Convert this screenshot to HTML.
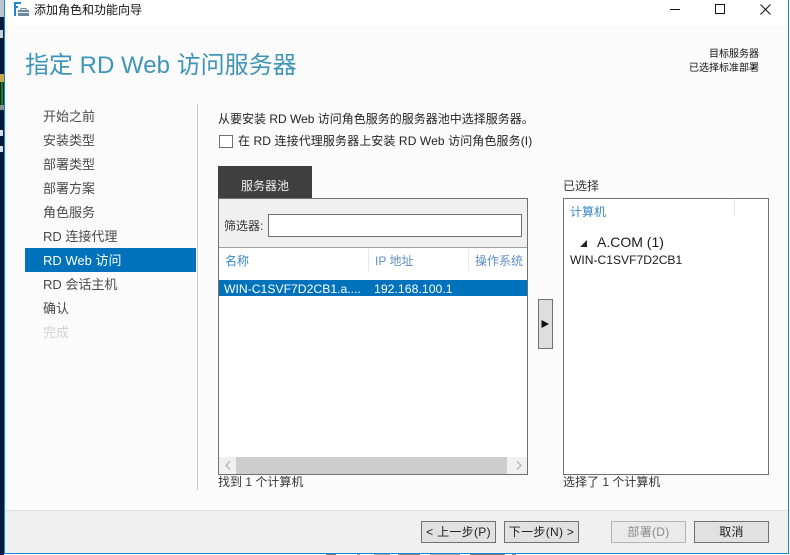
<!DOCTYPE html>
<html><head><meta charset="utf-8">
<style>
html,body{margin:0;padding:0;width:790px;height:555px;overflow:hidden;background:#fff}
*{box-sizing:border-box}
body{position:relative;font-family:"Liberation Sans","Noto Sans CJK SC",sans-serif;font-size:12px;color:#333}
.a{position:absolute;white-space:nowrap}
.nav{position:absolute;left:43px;font-size:13px;line-height:24px;height:24px;color:#4a4a4a;white-space:nowrap}
.btn{position:absolute;top:521px;height:22px;width:75px;background:#e1e1e1;border:1px solid #707070;text-align:center;font-size:12px;line-height:21px;color:#222;letter-spacing:.3px}
</style></head><body>
<!-- desktop strip -->
<div class="a" style="left:0;top:0;width:4px;height:555px;background:#001c3c"></div>
<div class="a" style="left:0;top:0;width:4px;height:17px;background:#b9c6d0"></div>
<div class="a" style="left:0;top:30px;width:3px;height:8px;background:#c8d0d8"></div>
<div class="a" style="left:0;top:74px;width:4px;height:8px;background:#c9a64a"></div>
<div class="a" style="left:1px;top:82px;width:2px;height:23px;background:#0d8a12"></div>
<div class="a" style="left:0;top:105px;width:4px;height:5px;background:#8a8f90"></div>
<div class="a" style="left:0;top:130px;width:3px;height:6px;background:#dde"></div>
<div class="a" style="left:0;top:146px;width:3px;height:6px;background:#dde"></div>
<!-- window -->
<div class="a" style="left:4px;top:0;width:785px;height:554px;background:#fff;border-left:1px solid #1883d7;border-right:1px solid #1883d7;border-bottom:1px solid #1883d7"></div>
<!-- desktop bottom sliver -->
<div class="a" style="left:326px;top:554px;width:10px;height:1px;background:#777"></div>
<div class="a" style="left:357px;top:554px;width:3px;height:1px;background:#999"></div>
<div class="a" style="left:374px;top:554px;width:16px;height:1px;background:#aaa"></div>
<div class="a" style="left:398px;top:554px;width:22px;height:1px;background:#888"></div>
<div class="a" style="left:430px;top:554px;width:30px;height:1px;background:#aaa"></div>
<div class="a" style="left:470px;top:554px;width:35px;height:1px;background:#777"></div>
<div class="a" style="left:512px;top:554px;width:4px;height:1px;background:#999"></div>
<div class="a" style="left:5px;top:25px;width:783px;height:486px;background:#fbfbfb"></div>
<div class="a" style="left:5px;top:510px;width:783px;height:1px;background:#dfdfdf"></div>
<div class="a" style="left:5px;top:511px;width:783px;height:42px;background:#f0f0f0"></div>
<!-- title icon -->
<svg class="a" style="left:14px;top:2px" width="15" height="14" viewBox="0 0 15 14">
<rect x="0" y="0" width="2" height="14" fill="#1e88d8"/><rect x="0" y="0" width="7" height="2" fill="#1e88d8"/><rect x="0" y="4" width="4" height="2" fill="#1e88d8"/>
<rect x="4" y="8" width="11" height="6" fill="#6d8a9c"/><path d="M7 8V6.5H12V8" stroke="#6d8a9c" stroke-width="1" fill="none"/><rect x="4" y="10" width="11" height="1" fill="#e6ecf0"/>
</svg>
<div class="a" style="left:34px;top:1px;font-size:12px;line-height:18px;color:#111">添加角色和功能向导</div>
<!-- window controls -->
<div class="a" style="left:670px;top:9px;width:10px;height:1px;background:#111"></div>
<div class="a" style="left:715px;top:4px;width:10px;height:10px;border:1px solid #111"></div>
<svg class="a" style="left:760px;top:4px" width="11" height="11" viewBox="0 0 11 11"><path d="M0.5 0.5L10.5 10.5M10.5 0.5L0.5 10.5" stroke="#111" stroke-width="1" fill="none"/></svg>
<!-- header -->
<div class="a" style="left:25px;top:49px;font-size:24px;line-height:34px;color:#3f95b9">指定 RD Web 访问服务器</div>
<div class="a" style="right:31px;top:48px;font-size:10px;line-height:14px;color:#111;text-align:right">目标服务器<br>已选择标准部署</div>
<!-- nav -->
<div class="nav" style="top:105px">开始之前</div>
<div class="nav" style="top:129px">安装类型</div>
<div class="nav" style="top:153px">部署类型</div>
<div class="nav" style="top:177px">部署方案</div>
<div class="nav" style="top:201px">角色服务</div>
<div class="nav" style="top:225px">RD 连接代理</div>
<div class="a" style="left:25px;top:248px;width:171px;height:24px;background:#0072bc"></div>
<div class="nav" style="top:249px;color:#fff">RD Web 访问</div>
<div class="nav" style="top:273px">RD 会话主机</div>
<div class="nav" style="top:297px">确认</div>
<div class="nav" style="top:321px;color:#d0d0d0">完成</div>
<div class="a" style="left:197px;top:104px;width:1px;height:386px;background:#c8c8c8"></div>
<!-- content -->
<div class="a" style="left:218px;top:110px;font-size:12px;line-height:18px;color:#222">从要安装 RD Web 访问角色服务的服务器池中选择服务器。</div>
<div class="a" style="left:219px;top:135px;width:14px;height:13px;background:#fff;border:1px solid #707070"></div>
<div class="a" style="left:238px;top:132px;font-size:12px;line-height:18px;color:#222;letter-spacing:.1px">在 RD 连接代理服务器上安装 RD Web 访问角色服务(I)</div>
<!-- pool box -->
<div class="a" style="left:218px;top:198px;width:310px;height:277px;background:#fff;border:1px solid #707070"></div>
<!-- tab -->
<div class="a" style="left:218px;top:166px;width:94px;height:32px;background:#3f3f3f"></div>
<div class="a" style="left:241px;top:177px;font-size:12px;line-height:18px;color:#f0f0f0">服务器池</div>
<div class="a" style="left:219px;top:199px;width:308px;height:49px;background:#f0f0f0;border-bottom:1px solid #a0a0a0"></div>
<div class="a" style="left:224px;top:217px;font-size:12px;line-height:18px;color:#333">筛选器:</div>
<div class="a" style="left:268px;top:214px;width:254px;height:23px;background:#fff;border:1px solid #707070"></div>
<div class="a" style="left:225px;top:252px;font-size:12px;line-height:18px;color:#3a87c8">名称</div>
<div class="a" style="left:375px;top:252px;font-size:12px;line-height:18px;color:#5f8fc8">IP 地址</div>
<div class="a" style="left:475px;top:252px;font-size:12px;line-height:18px;color:#5f8fc8">操作系统</div>
<div class="a" style="left:368px;top:249px;width:1px;height:22px;background:#e8e8e8"></div>
<div class="a" style="left:468px;top:249px;width:1px;height:22px;background:#e8e8e8"></div>
<div class="a" style="left:219px;top:280px;width:308px;height:16px;background:#0072bc"></div>
<div class="a" style="left:224px;top:280px;font-size:12.2px;line-height:18px;color:#fff">WIN-C1SVF7D2CB1.a....</div>
<div class="a" style="left:374px;top:280px;font-size:12.3px;line-height:18px;color:#fff">192.168.100.1</div>
<!-- scrollbar -->
<div class="a" style="left:219px;top:457px;width:308px;height:17px;background:#f0f0f0"></div>
<div class="a" style="left:236px;top:457px;width:271px;height:17px;background:#cdcdcd"></div>
<svg class="a" style="left:225px;top:461px" width="6" height="9" viewBox="0 0 6 9"><path d="M5 .5L1 4.5L5 8.5" stroke="#b5b5b5" stroke-width="1.3" fill="none"/></svg>
<svg class="a" style="left:516px;top:461px" width="6" height="9" viewBox="0 0 6 9"><path d="M1 .5L5 4.5L1 8.5" stroke="#b5b5b5" stroke-width="1.3" fill="none"/></svg>
<div class="a" style="left:218px;top:473px;font-size:12px;line-height:18px;color:#333">找到 1 个计算机</div>
<!-- arrow button -->
<div class="a" style="left:538px;top:299px;width:15px;height:50px;background:#dedede;border:1px solid #707070"></div>
<svg class="a" style="left:541px;top:320px" width="9" height="8" viewBox="0 0 9 8"><path d="M0.5 0L8 4L0.5 8Z" fill="#111"/></svg>
<!-- selected -->
<div class="a" style="left:563px;top:177px;font-size:12px;line-height:18px;color:#333">已选择</div>
<div class="a" style="left:563px;top:198px;width:206px;height:277px;background:#fff;border:1px solid #707070"></div>
<div class="a" style="left:570px;top:203px;font-size:12px;line-height:18px;color:#3a87c8">计算机</div>
<div class="a" style="left:734px;top:199px;width:1px;height:17px;background:#e4e4e4"></div>
<svg class="a" style="left:579px;top:239px" width="9" height="9" viewBox="0 0 9 9"><path d="M8 1V8H1Z" fill="#222"/></svg>
<div class="a" style="left:597px;top:233px;font-size:14px;line-height:19px;color:#1a1a1a">A.COM (1)</div>
<div class="a" style="left:570px;top:252px;font-size:12.1px;line-height:17px;color:#1a1a1a">WIN-C1SVF7D2CB1</div>
<div class="a" style="left:563px;top:473px;font-size:12px;line-height:18px;color:#333">选择了 1 个计算机</div>
<!-- buttons -->
<div class="btn" style="left:421px">&lt; 上一步(P)</div>
<div class="btn" style="left:504px">下一步(N) &gt;</div>
<div class="btn" style="left:611px;background:#eaeaea;border-color:#b5b5b5;color:#8a8a8a">部署(D)</div>
<div class="btn" style="left:694px">取消</div>
</body></html>
